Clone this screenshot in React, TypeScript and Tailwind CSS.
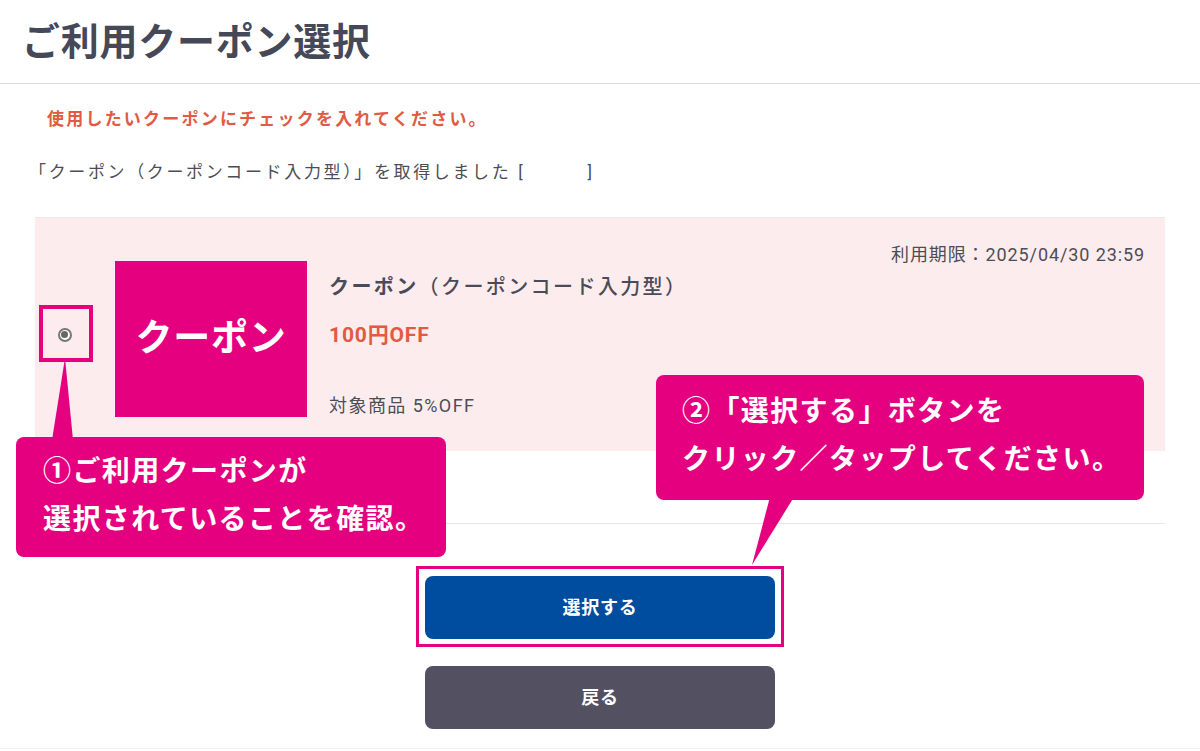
import React from 'react';

const font = { fontFamily: 'Roboto, "Noto Sans CJK JP", "Noto Sans", sans-serif' };

function Callout({ className, tail, children }: { className: string; tail: React.ReactNode; children: React.ReactNode }) {
    return (
        <div className={`absolute ${className}`}>
            <div className="relative rounded-[8px] bg-[#e4007f] text-white font-bold text-[28px] leading-[48px] tracking-[0.05em] whitespace-nowrap">
                {children}
            </div>
            {tail}
        </div>
    );
}

export default function App() {
    return (
        <div className="relative w-[1200px] h-[751px] bg-white overflow-hidden text-[#4a4b5a]" style={font}>
            <header className="h-[84px] border-b border-[#dcdcdc] flex items-center px-[22px]">
                <h1 className="text-[38px] font-bold tracking-[0.02em] text-[#454857] leading-none">ご利用クーポン選択</h1>
            </header>

            <main className="px-[35px]">
                <p className="mt-[23px] pl-[12px] text-[17px] font-bold tracking-[0.13em] text-[#e05a44]">
                    使用したいクーポンにチェックを入れてください。
                </p>
                <p className="mt-[27px] -ml-[6px] text-[17px] tracking-[0.155em] text-[#4d4d55]">
                    「クーポン（クーポンコード入力型）」を取得しました [<span className="inline-block w-[62px]" />]
                </p>

                <section className="mt-[32px] h-[234px] bg-[#fdeced] border-t border-[#eaeaea] flex relative">
                    <div className="w-[59px] flex items-center justify-center">
                        <span className="w-[14px] h-[14px] rounded-full border-[2px] border-[#777] flex items-center justify-center bg-white">
                            <span className="w-[7px] h-[7px] rounded-full bg-[#666]" />
                        </span>
                    </div>
                    <div className="ml-[21px] mt-[43px] w-[192px] h-[156px] bg-[#e4007f] flex items-center justify-center text-white font-bold text-[37px] tracking-[0.02em]">
                        クーポン
                    </div>
                    <div className="ml-[22px] pt-[55px] flex flex-col">
                        <div className="text-[20px] font-bold text-[#4a4b5a] tracking-[0.12em] leading-[28px]">
                            クーポン<span className="font-medium">（クーポンコード入力型）</span>
                        </div>
                        <div className="mt-[20px] text-[21px] font-bold text-[#e05a44] leading-[28px] tracking-[0.04em]">100円OFF</div>
                        <div className="mt-[45px] text-[18px] text-[#4d4d55] leading-[24px] tracking-[0.08em]">対象商品 5%OFF</div>
                    </div>
                    <div className="ml-auto pt-[23px] pr-[20px] text-[18px] text-[#4d4d55] tracking-[0.05em]">利用期限：2025/04/30 23:59</div>
                </section>

                <div className="h-[73px] border-b border-[#e6e6e6]" />

                <div className="mt-[52px] flex flex-col items-center gap-[27px]">
                    <div className="relative">
                        <button className="w-[350px] h-[63px] rounded-[8px] bg-[#004da0] text-white font-bold text-[18px] tracking-[0.04em]">選択する</button>
                        <div className="absolute -inset-x-[9px] -top-[10px] -bottom-[8px] border-[3px] border-[#e4007f] pointer-events-none" />
                    </div>
                    <button className="w-[350px] h-[63px] rounded-[8px] bg-[#535161] text-white font-bold text-[18px] tracking-[0.04em]">戻る</button>
                </div>
            </main>

            <div className="absolute left-[39px] top-[305px] w-[54px] h-[57px] border-[4px] border-[#e4007f]" />

            <Callout
                className="left-[16px] top-[437px] w-[430px]"
                tail={
                    <svg className="absolute left-[30px] -top-[79px]" width="40" height="82" viewBox="0 0 40 82">
                        <polygon points="6,82 27,82 19,0" fill="#e4007f" />
                    </svg>
                }
            >
                <div className="h-[120px] px-[27px] pt-[11px]">
                    <div>①ご利用クーポンが</div>
                    <div>選択されていることを確認。</div>
                </div>
            </Callout>

            <Callout
                className="left-[656px] top-[375px] w-[488px]"
                tail={
                    <svg className="absolute left-[92px] top-[122px]" width="50" height="68" viewBox="0 0 50 68">
                        <polygon points="22,0 46,0 4,68" fill="#e4007f" />
                    </svg>
                }
            >
                <div className="h-[125px] px-[26px] pt-[13px]">
                    <div>②「選択する」ボタンを</div>
                    <div>クリック／タップしてください。</div>
                </div>
            </Callout>

            <div className="absolute left-0 right-0 top-[748px] border-t border-[#eeeeee]" />
        </div>
    );
}
